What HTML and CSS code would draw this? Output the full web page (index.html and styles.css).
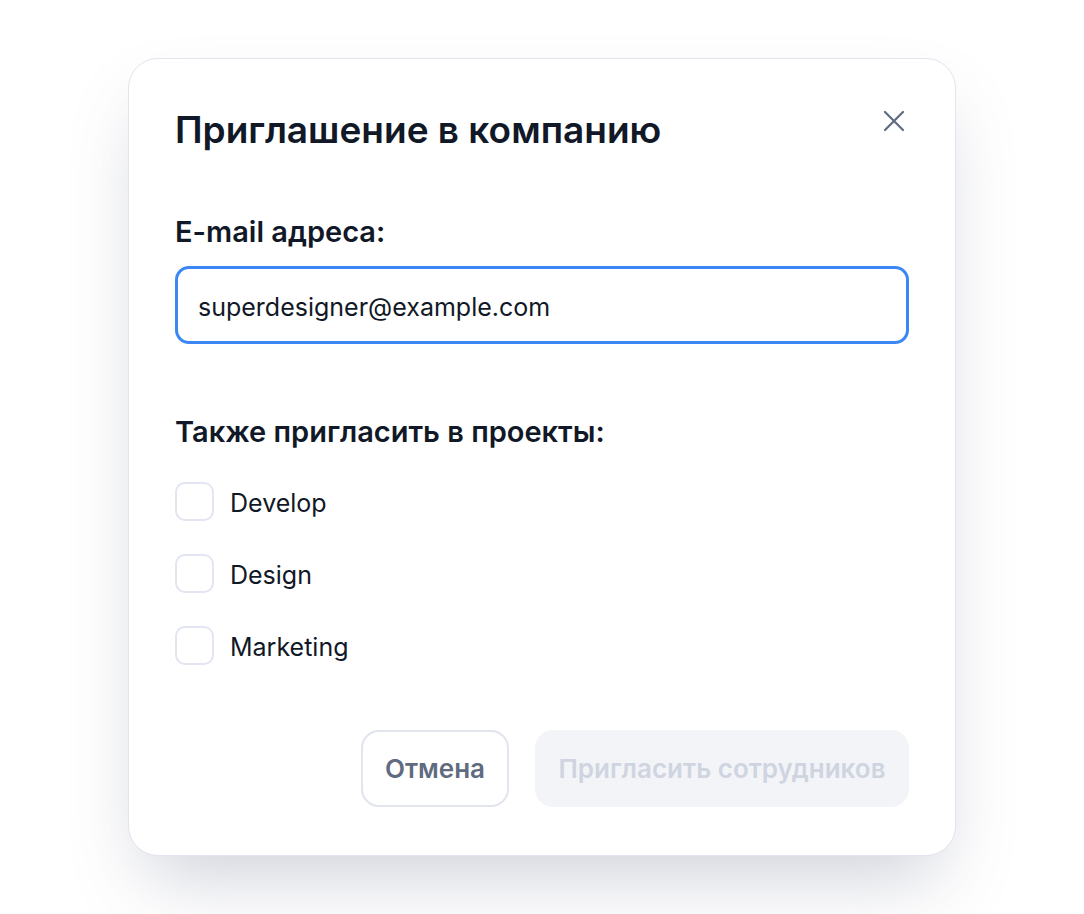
FILE: index.html
```html
<!DOCTYPE html>
<html lang="ru">

<head>
    <meta charset="UTF-8">
    <meta name="viewport" content="width=device-width, initial-scale=1.0">
    <title>Приглашение в компанию</title>
    <link rel="stylesheet" href="styles.css">
</head>

<body>
    <div class="modal">
        <div class="modal-header">
            <h2>Приглашение в компанию</h2>
            <button class="close-btn" aria-label="Закрыть">
                <svg width="24" height="24" viewBox="0 0 24 24" fill="none" stroke="#5f6b80" stroke-width="2.2" stroke-linecap="round">
                    <path d="M3 3L21 21M21 3L3 21" />
                </svg>
            </button>
        </div>

        <label class="field-label" for="emails">E-mail адреса:</label>
        <input type="text" id="emails" class="email-input" value="superdesigner@example.com">

        <div class="field-label projects-label">Также пригласить в проекты:</div>
        <div class="projects">
            <label class="check-row">
                <input type="checkbox">
                <span class="box"></span>
                <span class="check-text">Develop</span>
            </label>
            <label class="check-row">
                <input type="checkbox">
                <span class="box"></span>
                <span class="check-text">Design</span>
            </label>
            <label class="check-row">
                <input type="checkbox">
                <span class="box"></span>
                <span class="check-text">Marketing</span>
            </label>
        </div>

        <div class="actions">
            <button class="btn btn-cancel">Отмена</button>
            <button class="btn btn-invite" disabled>Пригласить сотрудников</button>
        </div>
    </div>
</body>

</html>
```

FILE: styles.css
```css
* {
    box-sizing: border-box;
}

html,
body {
    height: 100%;
}

body {
    font-family: Inter, "Noto Sans", sans-serif;
    margin: 0;
    padding: 0;
    background-color: #ffffff;
    color: #111827;
    display: flex;
    align-items: center;
    justify-content: center;
}

.modal {
    width: 828px;
    height: 798px;
    padding: 47px 46px 48px;
    background-color: #ffffff;
    border: 1px solid #e2e4ee;
    border-radius: 30px;
    box-shadow: 0 37px 75px -18px rgba(80, 86, 120, 0.28);
    display: flex;
    flex-direction: column;
}

.modal-header {
    display: flex;
    justify-content: space-between;
    align-items: flex-start;
}

.modal-header h2 {
    margin: 0;
    font-size: 37px;
    font-weight: 600;
    line-height: 48px;
    color: #111827;
}

.close-btn {
    background: none;
    border: none;
    padding: 0;
    margin-top: 3px;
    margin-right: 3px;
    cursor: pointer;
    width: 24px;
    height: 24px;
}

.field-label {
    display: block;
    margin-top: 58px;
    font-size: 29px;
    font-weight: 600;
    line-height: 40px;
    color: #111827;
}

.email-input {
    margin-top: 14px;
    width: 100%;
    height: 78px;
    padding: 3px 20px 0;
    border: 3px solid #3b87f6;
    border-radius: 14px;
    font-family: Inter, "Noto Sans", sans-serif;
    font-size: 25px;
    color: #111827;
    outline: none;
}

.projects-label {
    margin-top: 68px;
}

.projects {
    margin-top: 30px;
    display: flex;
    flex-direction: column;
    gap: 33px;
}

.check-row {
    display: flex;
    align-items: center;
    gap: 16px;
    height: 39px;
    font-size: 25px;
    color: #111827;
    cursor: pointer;
}

.check-row input {
    display: none;
}

.check-text {
    padding-top: 3px;
    line-height: 36px;
}

.box {
    width: 39px;
    height: 39px;
    border: 2px solid #e3e5f0;
    border-radius: 10px;
    background-color: #ffffff;
}

.actions {
    margin-top: auto;
    display: flex;
    justify-content: flex-end;
    gap: 26px;
}

.btn {
    height: 77px;
    padding: 0 23px;
    border-radius: 18px;
    font-family: Inter, "Noto Sans", sans-serif;
    font-size: 26px;
    font-weight: 600;
    cursor: pointer;
}

.btn-cancel {
    width: 148px;
    padding: 0;
    background-color: #ffffff;
    border: 2px solid #e2e4ee;
    color: #5f6b80;
}

.btn-invite {
    width: 374px;
    background-color: #f3f4f8;
    border: none;
    color: #cfd5e0;
    cursor: default;
}
```
